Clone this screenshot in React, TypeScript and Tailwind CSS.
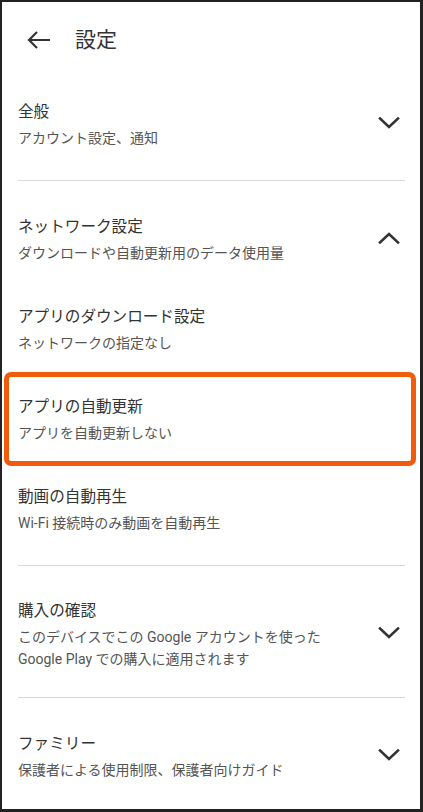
import React from "react";

const font = { fontFamily: '"Roboto", "Noto Sans CJK JP", "Noto Sans", sans-serif' };

function ChevronDown() {
  return (
    <svg width="22" height="14" viewBox="0 0 22 14" fill="none">
      <polyline points="2,2.5 11,11 20,2.5" stroke="#333" strokeWidth="2.6" strokeLinecap="square" />
    </svg>
  );
}

function ChevronUp() {
  return (
    <svg width="22" height="14" viewBox="0 0 22 14" fill="none">
      <polyline points="2,11.5 11,3 20,11.5" stroke="#333" strokeWidth="2.6" strokeLinecap="square" />
    </svg>
  );
}

function Row({
  title,
  sub,
  chevron,
  pad = "pt-[19px] pb-[19px]",
}: {
  title: string;
  sub: React.ReactNode;
  chevron?: "up" | "down";
  pad?: string;
}) {
  return (
    <div className={`flex items-center justify-between pr-[5px] ${pad}`}>
      <div className="flex flex-col">
        <div className="text-[15.6px] leading-[30px] text-[#333]">{title}</div>
        <div className="text-[14px] leading-[22px] text-[#555]">{sub}</div>
      </div>
      {chevron === "down" && <ChevronDown />}
      {chevron === "up" && <ChevronUp />}
    </div>
  );
}

function Divider() {
  return (
    <div className="pt-[12px] pb-[12px]">
      <div className="h-px bg-[#d9d9d9]" />
    </div>
  );
}

export default function App() {
  return (
    <div
      style={font}
      className="w-[423px] h-[812px] bg-white border-l-2 border-t-2 border-r-[3px] border-b-[3px] border-[#222] overflow-hidden"
    >
      <div className="pl-[16px] pr-[15px]">
        <div className="h-[76px] flex items-center">
          <svg width="24" height="20" viewBox="0 0 24 20" fill="none" className="ml-[9px]">
            <path d="M2 10 H23 M10 2 L2 10 L10 18" stroke="#333" strokeWidth="2.2" />
          </svg>
          <div className="ml-[24px] text-[21px] leading-[28px] text-[#333]">設定</div>
        </div>

        <Row title="全般" sub="アカウント設定、通知" chevron="down" />
        <Divider />
        <Row title="ネットワーク設定" sub="ダウンロードや自動更新用のデータ使用量" chevron="up" />
        <Row title="アプリのダウンロード設定" sub="ネットワークの指定なし" />
        <div className="relative">
          <div className="absolute left-[-14px] right-[-11px] top-[-1px] bottom-[-3px] border-[5px] border-[#f05c0b] rounded-[7px]" />
          <Row title="アプリの自動更新" sub="アプリを自動更新しない" />
        </div>
        <Row title="動画の自動再生" sub="Wi-Fi 接続時のみ動画を自動再生" />
        <Divider />
        <Row
          title="購入の確認"
          sub={
            <>
              このデバイスでこの Google アカウントを使った
              <br />
              Google Play での購入に適用されます
            </>
          }
          chevron="down"
          pad="pt-[18px] pb-[15px]"
        />
        <Divider />
        <Row title="ファミリー" sub="保護者による使用制限、保護者向けガイド" chevron="down" />
      </div>
    </div>
  );
}
